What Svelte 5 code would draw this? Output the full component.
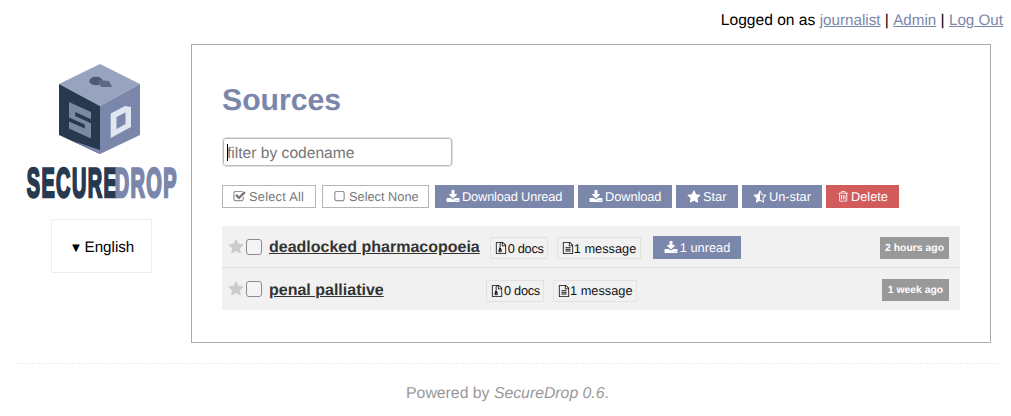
<script>
  const P = {
    download: "M1344 1344q0-26-19-45t-45-19-45 19-19 45 19 45 45 19 45-19 19-45zm256 0q0-26-19-45t-45-19-45 19-19 45 19 45 45 19 45-19 19-45zm128-224v320q0 40-28 68t-68 28h-1472q-40 0-68-28t-28-68v-320q0-40 28-68t68-28h465l135 136q58 56 136 56t136-56l136-136h464q40 0 68 28t28 68zm-325-569q17 41-14 70l-448 448q-18 19-45 19t-45-19l-448-448q-31-29-14-70 17-39 59-39h256v-448q0-26 19-45t45-19h256q26 0 45 19t19 45v448h256q42 0 59 39z",
    star: "M1728 647q0 22-26 48l-363 354 86 500q1 7 1 20 0 21-10.5 35.5t-30.5 14.5q-19 0-40-12l-449-236-449 236q-22 12-40 12-21 0-31.5-14.5t-10.5-35.5q0-6 2-20l86-500-364-354q-25-27-25-48 0-37 56-46l502-73 225-455q19-41 49-41t49 41l225 455 502 73q56 9 56 46z",
    unstar: "M1250 957l257-250-356-52-66-10-30-60-159-322v963l59 31 318 168-60-355-12-66zm452-262l-363 354 86 500q5 33-6 51.5t-34 18.5q-17 0-40-12l-449-236-449 236q-23 12-40 12-23 0-34-18.5t-6-51.5l86-500-364-354q-32-32-23-59.5t54-34.5l502-73 225-455q20-41 49-41 28 0 49 41l225 455 502 73q45 7 54 34.5t-24 59.5z",
    check: "M1472 930v318q0 119-84.5 203.5t-203.5 84.5h-832q-119 0-203.5-84.5t-84.5-203.5v-832q0-119 84.5-203.5t203.5-84.5h832q63 0 117 25 15 7 18 23 3 17-9 29l-49 49q-10 10-23 10-3 0-9-2-23-6-45-6h-832q-66 0-113 47t-47 113v832q0 66 47 113t113 47h832q66 0 113-47t47-113v-254q0-13 9-22l64-64q10-10 23-10 6 0 12 3 20 8 20 29zm231-489l-814 814q-24 24-57 24t-57-24l-430-430q-24-24-24-57t24-57l110-110q24-24 57-24t57 24l263 263 647-647q24-24 57-24t57 24l110 110q24 24 24 57t-24 57z",
    square: "M1312 256h-832q-66 0-113 47t-47 113v832q0 66 47 113t113 47h832q66 0 113-47t47-113v-832q0-66-47-113t-113-47zm288 160v832q0 119-84.5 203.5t-203.5 84.5h-832q-119 0-203.5-84.5t-84.5-203.5v-832q0-119 84.5-203.5t203.5-84.5h832q119 0 203.5 84.5t84.5 203.5z",
    trash: "M704 736v576q0 14-9 23t-23 9h-64q-14 0-23-9t-9-23v-576q0-14 9-23t23-9h64q14 0 23 9t9 23zm256 0v576q0 14-9 23t-23 9h-64q-14 0-23-9t-9-23v-576q0-14 9-23t23-9h64q14 0 23 9t9 23zm256 0v576q0 14-9 23t-23 9h-64q-14 0-23-9t-9-23v-576q0-14 9-23t23-9h64q14 0 23 9t9 23zm128 724v-948h-896v948q0 22 7 40.5t14.5 27 10.5 8.5h832q3 0 10.5-8.5t14.5-27 7-40.5zm-672-1076h448l-48-117q-7-9-17-11h-317q-10 2-17 11zm928 32v64q0 14-9 23t-23 9h-96v948q0 83-47 143.5t-113 60.5h-832q-66 0-113-59t-47-141v-952h-96q-14 0-23-9t-9-23v-64q0-14 9-23t23-9h309l70-167q15-37 54-63t79-26h320q40 0 79 26t54 63l70 167h309q14 0 23 9t9 23z",
    file: "M1596 380q28 28 48 76t20 88v1152q0 40-28 68t-68 28h-1344q-40 0-68-28t-28-68v-1600q0-40 28-68t68-28h896q40 0 88 20t76 48zm-444-244v376h376q-10-29-22-41l-313-313q-12-12-41-22zm384 1528v-1024h-416q-40 0-68-28t-28-68v-416h-768v1536h1280zm-1024-864q0-14 9-23t23-9h704q14 0 23 9t9 23v64q0 14-9 23t-23 9h-704q-14 0-23-9t-9-23v-64zm736 224q14 0 23 9t9 23v64q0 14-9 23t-23 9h-704q-14 0-23-9t-9-23v-64q0-14 9-23t23-9h704zm0 256q14 0 23 9t9 23v64q0 14-9 23t-23 9h-704q-14 0-23-9t-9-23v-64q0-14 9-23t23-9h704z",
    zip: "M768 384v-128h-128v128h128zm128 128v-128h-128v128h128zm-128 128v-128h-128v128h128zm128 128v-128h-128v128h128zm700-388q28 28 48 76t20 88v1152q0 40-28 68t-68 28h-1344q-40 0-68-28t-28-68v-1600q0-40 28-68t68-28h896q40 0 88 20t76 48zm-444-244v376h376q-10-29-22-41l-313-313q-12-12-41-22zm384 1528v-1024h-416q-40 0-68-28t-28-68v-416h-128v128h-128v-128h-512v1536h1280zm-627-721l107 349q8 27 8 52 0 83-72.5 137.5t-183.5 54.5-183.5-54.5-72.5-137.5q0-25 8-52 21-63 120-396v-128h128v128h79q22 0 39 13t23 34zm-141 465q53 0 90.5-19t37.5-45-37.5-45-90.5-19-90.5 19-37.5 45 37.5 45 90.5 19z"
  };
  const actions = [
    { label: "Select All", icon: "check", kind: "ghost a-all" },
    { label: "Select None", icon: "square", kind: "ghost a-none" },
    { label: "Download Unread", icon: "download", kind: "a-du" },
    { label: "Download", icon: "download", kind: "a-d" },
    { label: "Star", icon: "star", kind: "a-s" },
    { label: "Un-star", icon: "unstar", kind: "a-u" },
    { label: "Delete", icon: "trash", kind: "danger" }
  ];
  const sources = [
    { name: "deadlocked pharmacopoeia", unread: true, time: "2 hours ago" },
    { name: "penal palliative", unread: false, time: "1 week ago" }
  ];
</script>

{#snippet icon(name)}
  <svg class="ic" viewBox="0 0 1792 1792" aria-hidden="true"><path fill="currentColor" d={P[name]} /></svg>
{/snippet}

<div class="page">
  <header class="top">Logged on as <a href="#j">journalist</a> | <a href="#a">Admin</a> | <a href="#l">Log Out</a></header>

  <div class="columns">
    <aside class="side">
      <svg class="logo" viewBox="0 0 155 150" role="img" aria-label="SecureDrop">
        <polygon points="74,4 114,24 74,46 33,24" fill="#98a3c0" />
        <polygon points="33,24 74,46 74,94 33,75" fill="#27394f" />
        <polygon points="74,46 114,24 114,75 74,94" fill="#7b86ab" />
        <polygon points="47,81 74,90 74,94" fill="#7b86ab" />
        <ellipse cx="70" cy="21" rx="6.700" ry="4.300" fill="#4c5878" />
        <polygon points="72,20 83,21 86,27 75,27" fill="#5b6785" />
        <polygon points="43,42 65,52 65,78.600 43,68.600" fill="#7a8ba0" />
        <polygon points="49.200,52 65,59.200 65,63.200 49.200,56" fill="#27394f" />
        <polygon points="43,57.400 58.800,64.600 58.800,68.600 43,61.400" fill="#27394f" />
        <polygon points="84.700,53.500 99,46 105,47 105,67 84.700,78" fill="#dfe6f2" />
        <polygon points="90.500,57 99.500,52.500 99.500,64 90.500,69" fill="#7b86ab" />
        <text class="lt" transform="translate(0.700,137.200) scale(0.479,1)" fill="#27394f" stroke="#27394f">SECURE</text>
        <text class="lt" transform="translate(88.700,137.200) scale(0.480,1)" fill="#7b86ab" stroke="#7b86ab">DROP</text>
      </svg>
      <div class="lang"><span class="tri">▼</span>English</div>
    </aside>

    <main class="panel">
      <h1>Sources</h1>
      <div class="filter"><span class="caret"></span><input type="text" placeholder="filter by codename" /></div>
      <div class="actions">
        {#each actions as a}
          <button class="btn {a.kind}">{@render icon(a.icon)}{a.label}</button>
        {/each}
      </div>
      <ul class="list">
        {#each sources as s}
          <li class="row">
            <span class="star">{@render icon("star")}</span>
            <span class="cb"></span>
            <a class="name" href="#s">{s.name}</a>
            <span class="chip docs">{@render icon("zip")}0 docs</span>
            <span class="chip msg">{@render icon("file")}1 message</span>
            {#if s.unread}
              <button class="btn unread">{@render icon("download")}1 unread</button>
            {/if}
            <time>{s.time}</time>
          </li>
        {/each}
      </ul>
    </main>
  </div>

  <footer>Powered by <em>SecureDrop 0.6</em>.</footer>
</div>

<style>
  :global(body) {
    margin: 0;
    background: #fff;
    font-family: "Liberation Sans", Arial, sans-serif;
    font-size: 16px;
    color: #000;
    text-rendering: geometricPrecision;
  }
  .page { width: 1011px; height: 416px; overflow: hidden; }
  a { color: #7b86ab; }
  .top { height: 44px; box-sizing: border-box; padding: 12px 8px 0 0; text-align: right; line-height: 18px; font-size: 15.600px; }
  .top a { font-size: 15.200px; }
  .columns { display: flex; }
  .side { width: 191px; flex: none; display: flex; flex-direction: column; align-items: center; padding: 16px 0 0 11px; box-sizing: border-box; }
  .logo { width: 155px; height: 150px; display: block; margin-right: -5px; }
  .lt { font-family: "Liberation Sans", sans-serif; font-weight: 700; font-size: 41.500px; stroke-width: 2.600; letter-spacing: 3px; }
  .lang { margin-top: 9px; width: 101px; height: 54px; box-sizing: border-box; border: 1px solid #eee; display: flex; align-items: center; padding: 3px 0 0 18px; font-size: 15.200px; }
  .tri { width: 15px; font-size: 13px; }
  .panel { width: 800px; height: 299px; box-sizing: border-box; border: 1px solid #aaa; padding: 0 30px; }
  h1 { margin: 38px 0 0; font-size: 30.200px; line-height: 36px; color: #7b86ab; font-weight: 700; }
  .filter { position: relative; margin: 19px 0 0; width: 230px; }
  .filter input { display: block; width: 229px; height: 28px; box-sizing: border-box; margin: 0 0 0 1px; padding: 3px 3px 0 3px; border: 1px solid #bbb; border-radius: 3px; outline: 1px solid #e0e0e0; font: 15.600px "Liberation Sans", sans-serif; text-rendering: geometricPrecision; background: #fff; }
  .filter input::placeholder { color: #777; opacity: 1; }
  .caret { position: absolute; z-index: 1; left: 5px; top: 6px; width: 1px; height: 17px; background: #000; }
  .actions { display: flex; gap: 4px; margin-top: 19px; }
  .btn { height: 23px; box-sizing: border-box; border: 0; padding: 0 11px; background: #7b86ab; color: #fff; font: 12.800px/23px "Liberation Sans", sans-serif; text-rendering: geometricPrecision; display: inline-flex; align-items: center; white-space: nowrap; }
  .btn.ghost { background: #fff; border: 1px solid #b5b5b5; color: #777; margin-right: 2px; padding: 0 10px; }
  .btn.ghost .ic { width: 13px; height: 13px; margin-right: 3px; }
  .a-all { width: 94px; letter-spacing: 0.250px; }
  .a-none { width: 107px; }
  .a-du { width: 139px; letter-spacing: -0.150px; }
  .a-d { width: 94px; letter-spacing: -0.060px; }
  .a-s { width: 62px; }
  .a-u { width: 80px; }
  .btn.danger { background: #d25c5c; width: 73px; }
  .btn.danger .ic { width: 12.500px; height: 12.500px; margin-right: 1.500px; }
  .ic { width: 14px; height: 14px; margin-right: 2px; flex: none; }
  .list { list-style: none; margin: 18px 0 0; padding: 0; background: #f1f1f1; width: 738px; }
  .row { display: flex; align-items: center; height: 41px; padding: 0 11px 0 6px; box-sizing: border-box; }
  .row + .row { border-top: 1px solid #ddd; height: 43px; }
  .star { color: #ccc; width: 16px; height: 16px; display: flex; }
  .star .ic { width: 16px; height: 16px; margin: 0; }
  .cb { width: 16px; height: 16px; box-sizing: border-box; margin-left: 2px; border: 1px solid #8a8a8a; border-radius: 3px; background: #f4f4f4; }
  .name { margin: 3px 0 0 7px; min-width: 217px; box-sizing: border-box; padding-right: 10px; color: #333; font-weight: 700; font-size: 16px; white-space: nowrap; text-decoration: underline; }
  .chip { height: 22px; margin-top: 3px; box-sizing: border-box; border: 1px solid #e2e2e2; padding: 0 0 0 4px; margin-right: 9px; font-size: 12.800px; display: inline-flex; align-items: center; color: #111; white-space: nowrap; }
  .docs { width: 58px; letter-spacing: -0.300px; }
  .msg { width: 84px; }
  .msg .ic { margin-right: 0; }
  .chip .ic { width: 12px; height: 12px; }
  .chip.docs .ic { margin-right: 1px; }
  .unread { margin-left: 3px; margin-top: 2px; }
  time { margin-left: auto; margin-top: 2px; min-width: 67px; box-sizing: border-box; text-align: center; background: #999; color: #fff; font-size: 10.400px; font-weight: 700; height: 22px; line-height: 23px; padding: 0 5px; }
  footer { margin: 20px 13px 0 17px; border-top: 1px dashed #eee; text-align: center; color: #999; padding-top: 21px; line-height: 18px; font-size: 15.800px; }
</style>
